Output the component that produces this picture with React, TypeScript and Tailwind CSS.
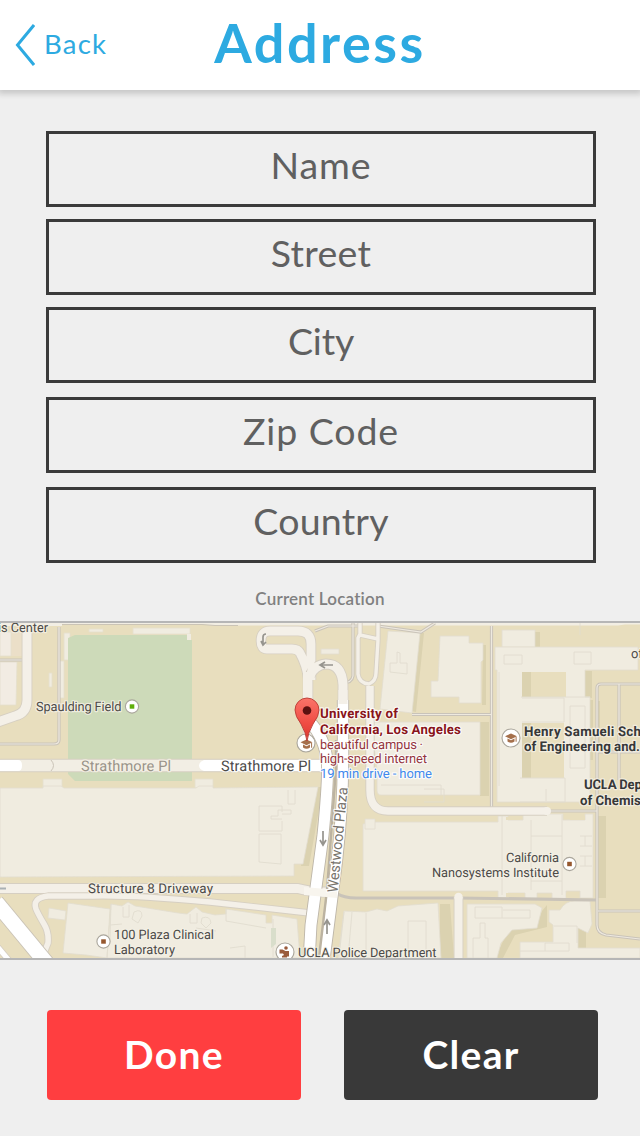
import React from "react";

type Field = { label: string; gap: string; tracking: string };

const fields: Field[] = [
  { label: "Name", gap: "mt-[41px]", tracking: "tracking-[0.9px]" },
  { label: "Street", gap: "mt-3", tracking: "tracking-[0.3px]" },
  { label: "City", gap: "mt-3", tracking: "-tracking-[0.2px]" },
  { label: "Zip Code", gap: "mt-3.5", tracking: "tracking-[0.9px]" },
  { label: "Country", gap: "mt-3.5", tracking: "tracking-[0.2px]" },
];

type LabelProps = {
  x: number;
  y: number;
  w?: number;
  size?: number;
  bold?: boolean;
  fill?: string;
  halo?: string;
  transform?: string;
  children: string;
};

function Label({ x, y, w, size = 12.9, bold, fill = "#4c4a48", halo = "#f5f1e6", transform, children }: LabelProps) {
  return (
    <text
      x={x}
      y={y}
      textLength={w}
      fontSize={size}
      fontWeight={bold ? 700 : 400}
      fill={fill}
      stroke={halo}
      strokeWidth={2.4}
      strokeOpacity={0.8}
      strokeLinejoin="round"
      paintOrder="stroke"
      transform={transform}
    >
      {children}
    </text>
  );
}

function Road({ d, w, fill = "#f4f0e8", edge = "#d6cfc2" }: { d: string; w: number; fill?: string; edge?: string }) {
  return (
    <g fill="none" strokeLinejoin="round">
      <path d={d} stroke={edge} strokeWidth={w + 1.8} />
      <path d={d} stroke={fill} strokeWidth={w} />
    </g>
  );
}

function Dot({ x, y, color, r = 6.6 }: { x: number; y: number; color?: string; r?: number }) {
  return (
    <g>
      <circle cx={x} cy={y} r={r} fill="#fff" stroke="#aaa69c" strokeWidth="1.1" />
      {color && <rect x={x - 2.3} y={y - 2.2} width="4.6" height="4.4" fill={color} />}
    </g>
  );
}

function Cap({ x, y }: { x: number; y: number }) {
  return (
    <g transform={`translate(${x} ${y})`} fill="#a5704c">
      <path d="M-6-1.7 0-4.6 6-1.7 0 1.2Z" />
      <path d="M-3.5.4 0 2.2 3.5.4V3.4Q0 6-3.5 3.4Z" />
      <path d="M4.6-1h1v4.8h-1z" />
    </g>
  );
}

function Map() {
  return (
    <svg className="block h-[335px] w-full" viewBox="0 623 640 335" fontFamily="Roboto, 'Liberation Sans', sans-serif">
      <defs>
        <linearGradient id="pin" x1="0" y1="0" x2="0" y2="1">
          <stop offset="0" stopColor="#fb7469" />
          <stop offset="0.6" stopColor="#ef4b43" />
          <stop offset="1" stopColor="#d9372f" />
        </linearGradient>
      </defs>
      <rect y="623" width="640" height="335" fill="#e8debe" />
      <path d="M0 623H640V624.5H625L618 625.5H215L202 624.5H62V626H0Z" fill="#f2eee4" />
      <path d="M62 624.5H202L215 625.5H238" fill="none" stroke="#cbc4b6" />

      {/* building shadows */}
      <g fill="#dbd2b0">
        <path d="M419 633h5l-8 79-5-1zM483 645h3v60h-4zM480 722h9v74h-9zM535 632h5v15h-5zM522 672h9v26h-9zM522 722h9v56h-9zM585 671h7v27h-7zM589 700h4v60h-4zM318 787h5l-14 79h-8zM598 816h8v82h-8zM440 904h10l4 54h-14zM542 911l5-6v22l-32 8-12 23h-8l14-29 28-5zM578 926h8v22h-8zM597 701h3v43h-3z" />
      </g>

      {/* buildings */}
      <path d="M11 632h11v24H11z" fill="#ebdfc8" />
      <g fill="#f0ece0" stroke="#e4dfcd" strokeWidth=".8">
        <path d="M0 632h11v24H0zM0 662h17l-1 43H0z" fill="#f2ece3" />
        <path d="M64 633h6v27h-6zM58 661h6v37h-6zM49 673h3v14h-3zM89 629h14v3H89zM133 628h57v6h-57zM43 779h19v9H43zM195 779h18v9h-18z" />
      </g>
      <path d="M68 638 75 635H187V640H192V781H75L68 774Z" fill="#cddab9" />
      <path d="M187 634h4v6h-4z" fill="#f0ece0" />
      <g fill="#f0ece0" stroke="#e2ddcf" strokeWidth=".8">
        <path d="M0 788H43V786H61L64 788H196L199 786H213V788L318 787 303 864H294V876L0 877Z" />
        <path d="M388 631 420 633 412 713 380 709Z" />
        <path d="M440 636h29v7h14v17l-2 2v41h-22v-6h-28v-16h7z" />
        <path d="M502 630h33v17h-33z" />
        <path d="M495 647H638V670H585V697H590V802H497V670H495Z" />
        <path d="M371 722H480V795H381Q377 795 377 790V770Z" />
        <path d="M363 824 374 822H498V816H508V820H523V814H563V820H585V814H593V898H580V891H566V899H552V893H537V899H525V893H508V898H498V891H363Z" />
        <path d="M365 819h10v10h-10z" />
        <path d="M321 649h18v5h-18z" />
        <path d="M467 904H535L542 908 537 928 512 930 501 943 497 958H467Z" />
        <path d="M549 910H560Q565 901 575 901H590L592 924 588 933 578 928V948H640V958H520V942H553V925L549 922Z" />
        <path d="M344 911 366 912 377 909 387 911 398 906 438 903 441 958H338Z" />
        <path d="M68 903 110 909 107 958 86 955 63 953ZM49 908 66 911 65 920 48 918ZM111 904 122 906 128 902 135 906 178 913 187 914 196 907 202 912 215 915 226 914V909L266 915V923H272V915L297 919 300 958H107Z" />
      </g>
      <g fill="#e8debe">
        <path d="M531 672h35v25h-35zM531 723h33v55h-33z" />
        <path d="M506 817h14v3h-14zM570 816h15v4h-15zM506 893h18v4h-18zM566 893h13v4h-13z" />
      </g>
      <path d="M522 672h9v25h-9zM522 723h9v55h-9z" fill="#dbd2b0" />
      <g fill="none" stroke="#e1dccf" strokeWidth=".9">
        <path d="M504 655h18v9h-18zM574 652h17v12h-17zM499 672v114M590 697h-69M570 706h15v62h-15zM522 698h42v24h-42M520 778h45v24h-45M397 652v11h-7v9l17 2v-11h-7v-10zM381 785h60v10M546 789v12" />
        <path d="M282 812V806H259V831H282V821M271 819H282M271 819V816H278V810H291V814H282M259 834V862L281 864V834ZM288 790v14h7v-14" />
        <path d="M502 815v80M531 820v70M562 815v80M531 836h31M531 881h31M580 836h12M580 846h12M580 856h12M580 866h12M585 836v10M585 856v10" />
        <path d="M475 907h27v11h28v-8h-27M475 907v11h27M480 923v15h-7v20M480 923h5v15h3v20M554 926h23v17M545 943h24v8h-24zM520 951h25M344 912l-5 45M352 912l-4 46M366 913v44M408 921v35M408 921h18v37M424 789h20v13h-20M580 620v15" />
        <path d="M123 907v10h6v-12M134 912q8-4 8 4l-4 7-6-4zM111 904l-1 35M110 925l12-1M190 914v9h7v-10M202 918q8-3 9 5l-5 5-5-5zM226 909v12l40 7M273 919v38M230 948l15-2v12M196 928l20 3" />
      </g>
      <path d="M271 928h5v16l-5 4z" fill="#d9decb" />

      {/* narrow paths */}
      <g fill="none" stroke="#c9c3b9" strokeWidth="3.2">
        <path d="M0 660H22M59 627V740Q59 744 54 744H0M353 623V676Q352 683 342 683M491.5 626V807M412 714.5H491M597 898V688Q597 684 601 684H640M619 684V780M597 752H640M550 811H597M597 816V925Q597 933 606 935L640 939M598 911H640M336 893Q344 898 356 898H458L597 900M315 631 328 626H360M378 626 421 632 435 623" />
      </g>
      <g fill="none" stroke="#eee9df" strokeWidth="1.2">
        <path d="M0 660H22M59 627V740Q59 744 54 744H0M353 623V676Q352 683 342 683M491.5 626V807M412 714.5H491M597 898V688Q597 684 601 684H640M619 684V780M597 752H640M550 811H597M597 816V925Q597 933 606 935L640 939M598 911H640M315 631 328 626H360M378 626 421 632 435 623" />
      </g>

      <Road d="M27 626V700Q27 713 15 716L-2 722" w={9} />
      <Road d="M360 622V634L358 638V674Q359 683 369 684Q376 681 376 673L378 640V622M360 635L378 639" w={3.4} />
      <Road d="M370 686V790Q370 811 388 811H547" w={7.5} />
      <circle cx="547" cy="811" r="4" fill="#f4f0e8" />
      <Road d="M458.5 897V960" w={8} />
      <circle cx="458.5" cy="897" r="4.2" fill="#f4f0e8" />
      <Road d="M-2 888.5H298Q307 891 320 892H332" w={9} />
      <Road d="M310 913 210 902Q135 895 92 896H48Q32 898 36 909 38 914 44 924 49 932 48 943L44 953" w={5.5} />
      <Road d="M-4 902 48 965" w={15} fill="#fff" edge="#c9c2b6" />
      <Road d="M-4 945 12 964" w={5} fill="#fff" />
      <path d="M0 888.5H6" stroke="#aab1b4" strokeWidth="2" />

      <Road d="M-2 765.5H324" w={11.5} fill="#f2eee4" />
      <path d="M51 760Q56 765.5 51 771" fill="none" stroke="#cbc4b8" />
      <path d="M0 760H18Q22 760 22 765.5T18 771H0ZM204 760Q199 762 199 765.5T204 771H324V760Z" fill="#fff" />

      {/* Westwood Plaza and the turning loop */}
      <Road d="M308 748V678Q307 666 300 653 298 649 292 649H267Q261 649 261 641 261 631 270 631H298Q311 631 311 644V680" w={8.8} />
      <Road d="M343 780V685Q342 664 326 664 314 665 310 676" w={9} />
      <Road d="M308 705V720Q326 738 327.5 765 328 785 323 835L311 925 309 962" w={11} fill="#fff" edge="#bdb6a9" />
      <Road d="M343 700V760Q343 805 337 860L324 962" w={10.5} fill="#fff" edge="#bdb6a9" />
      <path d="M307.5 672V712M343 690V704" stroke="#f4f0e8" strokeWidth="9" />
      <path d="M311 641V680" stroke="#f4f0e8" strokeWidth="7" />
      <path d="M336 740V768L327 890 319 958" fill="none" stroke="#bcb3a1" strokeWidth="2.4" />
      <path d="M304 887 337 890V898L304 895Z" fill="#f8f5ee" />
      <g fill="none" stroke="#96948e" strokeWidth="1.7">
        <path d="M333 665H320M325 662l-5 3 5 3M323 831V844M320 840l3 5 3-5M327 934V921M324 925l3-5 3 5M263 645V637q0-3 3-3M261 641l2 4 3-3" />
      </g>

      <g textRendering="geometricPrecision">
        <Label x={-2} y={632} w={50}>is Center</Label>
        <Label x={36} y={711} w={85.5}>Spaulding Field</Label>
        <Label x={81} y={771} w={90} size={14.6} fill="#999389">Strathmore Pl</Label>
        <Label x={221} y={771} w={90} size={14.6} halo="#fff">Strathmore Pl</Label>
        <Label x={337.5} y={893} w={106} size={14.6} fill="#77736c" halo="#fff" transform="rotate(-84.5 337.5 893)">Westwood Plaza</Label>
        <Label x={631} y={658}>of</Label>
        <Label x={524} y={735.5} w={117} size={13.4} bold fill="#373839">Henry Samueli Sch</Label>
        <Label x={524} y={751} w={116} size={13.4} bold fill="#373839">of Engineering and.</Label>
        <Label x={584} y={789} w={58} size={13.4} bold fill="#373839">UCLA Dep</Label>
        <Label x={580} y={804.5} w={61} size={13.4} bold fill="#373839">of Chemis</Label>
        <Label x={506} y={862} w={53}>California</Label>
        <Label x={432} y={877} w={127}>Nanosystems Institute</Label>
        <Label x={88} y={892.5} w={125} size={13.4}>Structure 8 Driveway</Label>
        <Label x={114} y={939} w={100}>100 Plaza Clinical</Label>
        <Label x={114} y={954} w={61}>Laboratory</Label>
        <Label x={298} y={957} w={138.5}>UCLA Police Department</Label>
        <Label x={320} y={718} w={78} size={13.4} bold fill="#89151b" halo="#fff">University of</Label>
        <Label x={320} y={734} w={141} size={13.4} bold fill="#89151b" halo="#fff">California, Los Angeles</Label>
        <Label x={320} y={748.5} w={103} size={13.1} fill="#943540" halo="#fff">beautiful campus ·</Label>
        <Label x={320} y={763} w={107} size={13.1} fill="#943540" halo="#fff">high-speed internet</Label>
        <Label x={320} y={778} w={112} size={13.1} fill="#4189ed" halo="#fff">19 min drive - home</Label>
      </g>

      <Dot x={132} y={706.5} color="#5fae0a" />
      <Dot x={569.5} y={864} color="#96582f" />
      <Dot x={103.5} y={941.5} color="#96582f" />
      <Dot x={511} y={738} r={9} />
      <Cap x={511} y={738} />
      <Dot x={306} y={743} r={9} />
      <Cap x={306.5} y={744} />
      <Dot x={285} y={952} r={9} />
      <g fill="#9a5b3c">
        <circle cx="286" cy="948" r="1.8" />
        <path d="M279.500 949.500h3l3 1.500h3.500v5.500h-2v1h-5v-1.500l2-1-1-1.500h-3.500z" />
      </g>
      <path d="M307 741Q306 733 301 724 295 716 295 710A12 12 0 0 1 319 710Q319 716 313 724 308 733 307 741Z" fill="url(#pin)" stroke="#b83b34" strokeWidth=".9" />
      <circle cx="307" cy="710.5" r="4.3" fill="#5c1110" />
    </svg>
  );
}

export default function App() {
  return (
    <div className="flex h-[1136px] w-[640px] flex-col overflow-hidden bg-[#efefef] font-['Lato','Liberation_Sans',sans-serif]">
      <header className="grid h-[90px] shrink-0 grid-cols-[214px_212px_214px] bg-white text-[#2daae1] shadow-[0_2px_6px_2px_rgba(0,0,0,0.17)]">
        <button className="flex h-[90px] items-center pl-[15px]">
          <svg className="h-[42px] w-5" viewBox="0 0 20 42" fill="none" stroke="currentColor" strokeWidth="3">
            <path d="M19 1 2.5 21 19 41" />
          </svg>
          <span className="-mt-[3px] ml-[9px] text-[27.5px] leading-8 tracking-[1.2px]">Back</span>
        </button>
        <h1 className="flex justify-center pt-[9px] text-[54px] leading-[68px] font-bold tracking-[2.5px] whitespace-nowrap">Address</h1>
      </header>

      <main className="flex flex-col">
        <form className="flex flex-col pl-[46px]">
          {fields.map((f) => (
            <div key={f.label} className={`${f.gap} flex h-[76px] w-[550px] items-center justify-center border-[3px] border-[#3a3a3a] pb-2`}>
              <span className={`${f.tracking} text-[37.5px] leading-[46px] text-[#606060]`}>{f.label}</span>
            </div>
          ))}
        </form>
        <p className="mt-[24px] h-[34px] text-center text-[17px] leading-6 font-semibold tracking-[0.2px] text-[#808080]">Current Location</p>
        <section className="h-[339px] border-y-2 border-[#b6b6b6]">
          <Map />
        </section>
        <div className="mt-[50px] flex gap-[43px] pl-[47px] text-[39px] leading-[46px] font-bold tracking-[1.3px] text-white">
          <button className="h-[90px] w-[254px] rounded-[4px] bg-[#ff3e40] pb-0.5">Done</button>
          <button className="h-[90px] w-[254px] rounded-[4px] bg-[#393939] pb-0.5">Clear</button>
        </div>
      </main>
    </div>
  );
}
